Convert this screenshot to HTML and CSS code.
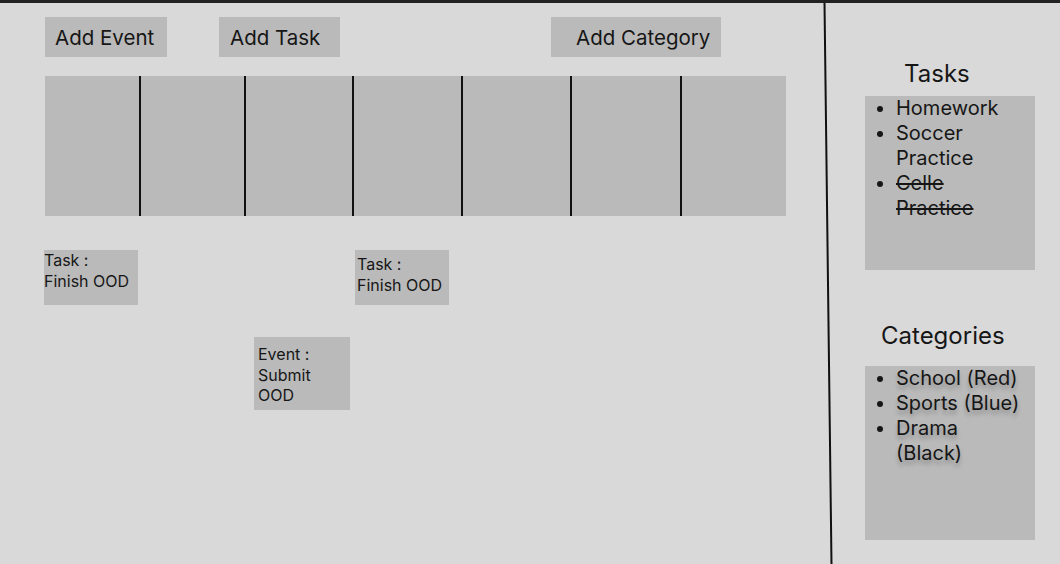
FILE: index.html
```
<!DOCTYPE html>
<html lang="en">
<head>
    <meta charset="UTF-8">
    <meta name="viewport" content="width=device-width, initial-scale=1.0">
    <title>Planner</title>
    <link rel="stylesheet" href="styles.css">
</head>
<body>
    <div class="page">
        <main class="planner">
            <div class="toolbar">
                <button class="btn btn-event">Add Event</button>
                <button class="btn btn-task">Add Task</button>
                <button class="btn btn-category">Add Category</button>
            </div>

            <div class="week">
                <div class="day"></div>
                <div class="day"></div>
                <div class="day"></div>
                <div class="day"></div>
                <div class="day"></div>
                <div class="day"></div>
                <div class="day"></div>
            </div>

            <div class="agenda">
                <div class="card card-mon">Task :<br>Finish OOD</div>
                <div class="card card-wed">Event :<br>Submit OOD</div>
                <div class="card card-thu">Task :<br>Finish OOD</div>
            </div>
        </main>

        <svg class="divider" width="10" height="561" viewBox="0 0 10 561">
            <line x1="1.5" y1="0" x2="8.5" y2="561" stroke="#111" stroke-width="2"/>
        </svg>

        <aside class="sidebar">
            <div class="panel">
                <h2 class="panel-title tasks-title">Tasks</h2>
                <div class="panel-box">
                    <ul class="list">
                        <li>Homework</li>
                        <li>Soccer Practice</li>
                        <li class="done">Celle Practice</li>
                    </ul>
                </div>
            </div>
            <div class="panel panel-categories">
                <h2 class="panel-title cat-title">Categories</h2>
                <div class="panel-box">
                    <ul class="list list-shadow">
                        <li>School (Red)</li>
                        <li>Sports (Blue)</li>
                        <li>Drama (Black)</li>
                    </ul>
                </div>
            </div>
        </aside>
    </div>
</body>
</html>
```

FILE: styles.css
```
body { margin: 0; height: 564px; overflow: hidden; background: #d9d9d9; color: #161616; font-family: Inter, "Noto Sans", sans-serif; }
.page { display: flex; height: 561px; border-top: 3px solid #222; }

.planner { width: 823px; padding: 14px 0 0 45px; box-sizing: border-box; }
.toolbar { display: flex; }
.btn { height: 40px; width: 122px; padding: 0 0 0 10px; border: none; background: #bababa; color: #161616; font-family: inherit; font-size: 20.5px; text-align: left; }
.btn-task { margin-left: 52px; width: 121px; padding-left: 11px; }
.btn-category { margin-left: 211px; width: 170px; padding-left: 25px; }

.week, .agenda { display: grid; width: 741px; grid-template-columns: 94px 105px 108px 109px 109px 110px 106px; }
.week { margin-top: 19px; height: 140px; background: #bababa; }
.day + .day { border-left: 2px solid #111; }

.agenda { margin-top: 34px; align-items: start; }
.card { background: #bababa; font-size: 16px; line-height: 20.5px; box-sizing: border-box; }
.card-mon { grid-column: 1; grid-row: 1; margin-left: -1px; width: 94px; height: 55px; }
.card-wed { grid-column: 3; grid-row: 1; margin: 87px 0 0 10px; width: 96px; height: 73px; padding: 7px 4px 0; }
.card-thu { grid-column: 4; grid-row: 1; margin-left: 3px; width: 94px; height: 55px; padding: 4px 2px 0; }

.divider { display: block; flex: none; }

.sidebar { flex: 1; padding: 58px 0 0 32px; }
.panel-title { margin: 0; font-size: 24px; font-weight: 400; line-height: 26px; }
.tasks-title { padding-left: 39px; }
.cat-title { padding-left: 16px; }
.panel-box { margin-top: 9px; width: 170px; height: 174px; background: #bababa; }
.panel-categories { margin-top: 53px; }
.panel-categories .panel-box { margin-top: 17px; }
.list { margin: 0; padding: 0 12px 0 31px; font-size: 20px; line-height: 25px; }
.done { text-decoration: line-through; }
.list-shadow { text-shadow: 0 4px 4px rgba(0, 0, 0, 0.25); }
```
